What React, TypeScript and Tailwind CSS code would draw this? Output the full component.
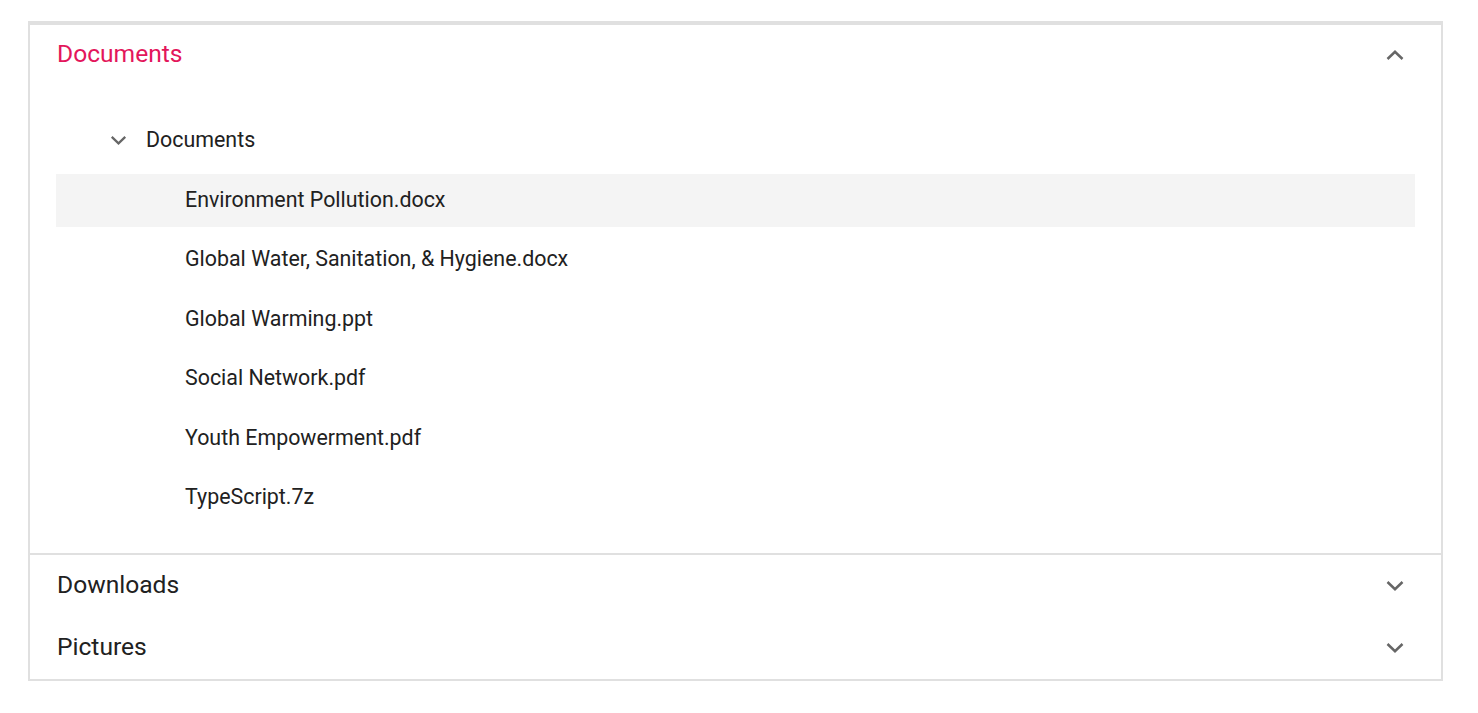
import React, { useState } from "react";

const files = [
  "Environment Pollution.docx",
  "Global Water, Sanitation, & Hygiene.docx",
  "Global Warming.ppt",
  "Social Network.pdf",
  "Youth Empowerment.pdf",
  "TypeScript.7z",
];

function Chevron({ up, className }: { up?: boolean; className?: string }) {
  return (
    <svg viewBox="0 0 18 10" className={className} fill="none">
      <path
        d={up ? "M1.5 9 L9 1.8 L16.5 9" : "M1.5 1 L9 8.2 L16.5 1"}
        stroke="#666666"
        strokeWidth="2.5"
      />
    </svg>
  );
}

export default function App() {
  const [selected, setSelected] = useState(files[0]);

  return (
    <div className="min-h-screen bg-white" style={{ fontFamily: "Roboto, 'Liberation Sans', sans-serif" }}>
      <div className="mt-[21px] ml-[28px] w-[1415px] border-2 border-t-4 border-[#e0e0e0] bg-white">
        {/* Documents (expanded) */}
        <div className="border-b-2 border-[#e0e0e0]">
          <div className="h-[62px] flex items-center justify-between pl-[27px] pr-[37px] pb-[3px]">
            <span className="text-[24.6px] text-[#e3165b]">Documents</span>
            <Chevron up className="w-[18px] h-[10px]" />
          </div>
          <div className="px-[26px] pt-[27px] pb-[29px] flex flex-col gap-[6.5px]">
            <div className="h-[53px] flex items-center pb-[1px]">
              <Chevron className="ml-[54px] w-[17px] h-[9px]" />
              <span className="ml-[19px] text-[21.4px] text-[#212121]">Documents</span>
            </div>
            {files.map((f) => (
              <div
                key={f}
                onClick={() => setSelected(f)}
                className={`h-[53px] flex items-center pl-[129px] cursor-pointer ${f === selected ? "bg-[#f4f4f4]" : ""}`}
              >
                <span className="text-[21.4px] text-[#212121]">{f}</span>
              </div>
            ))}
          </div>
        </div>
        {/* Downloads */}
        <div className="h-[62px] flex items-center justify-between pl-[27px] pr-[37px] pb-[1px]">
          <span className="text-[24.6px] text-[#212121]">Downloads</span>
          <Chevron className="w-[18px] h-[10px]" />
        </div>
        {/* Pictures */}
        <div className="h-[62px] flex items-center justify-between pl-[27px] pr-[37px] pb-[1px]">
          <span className="text-[24.6px] text-[#212121]">Pictures</span>
          <Chevron className="w-[18px] h-[10px]" />
        </div>
      </div>
    </div>
  );
}
